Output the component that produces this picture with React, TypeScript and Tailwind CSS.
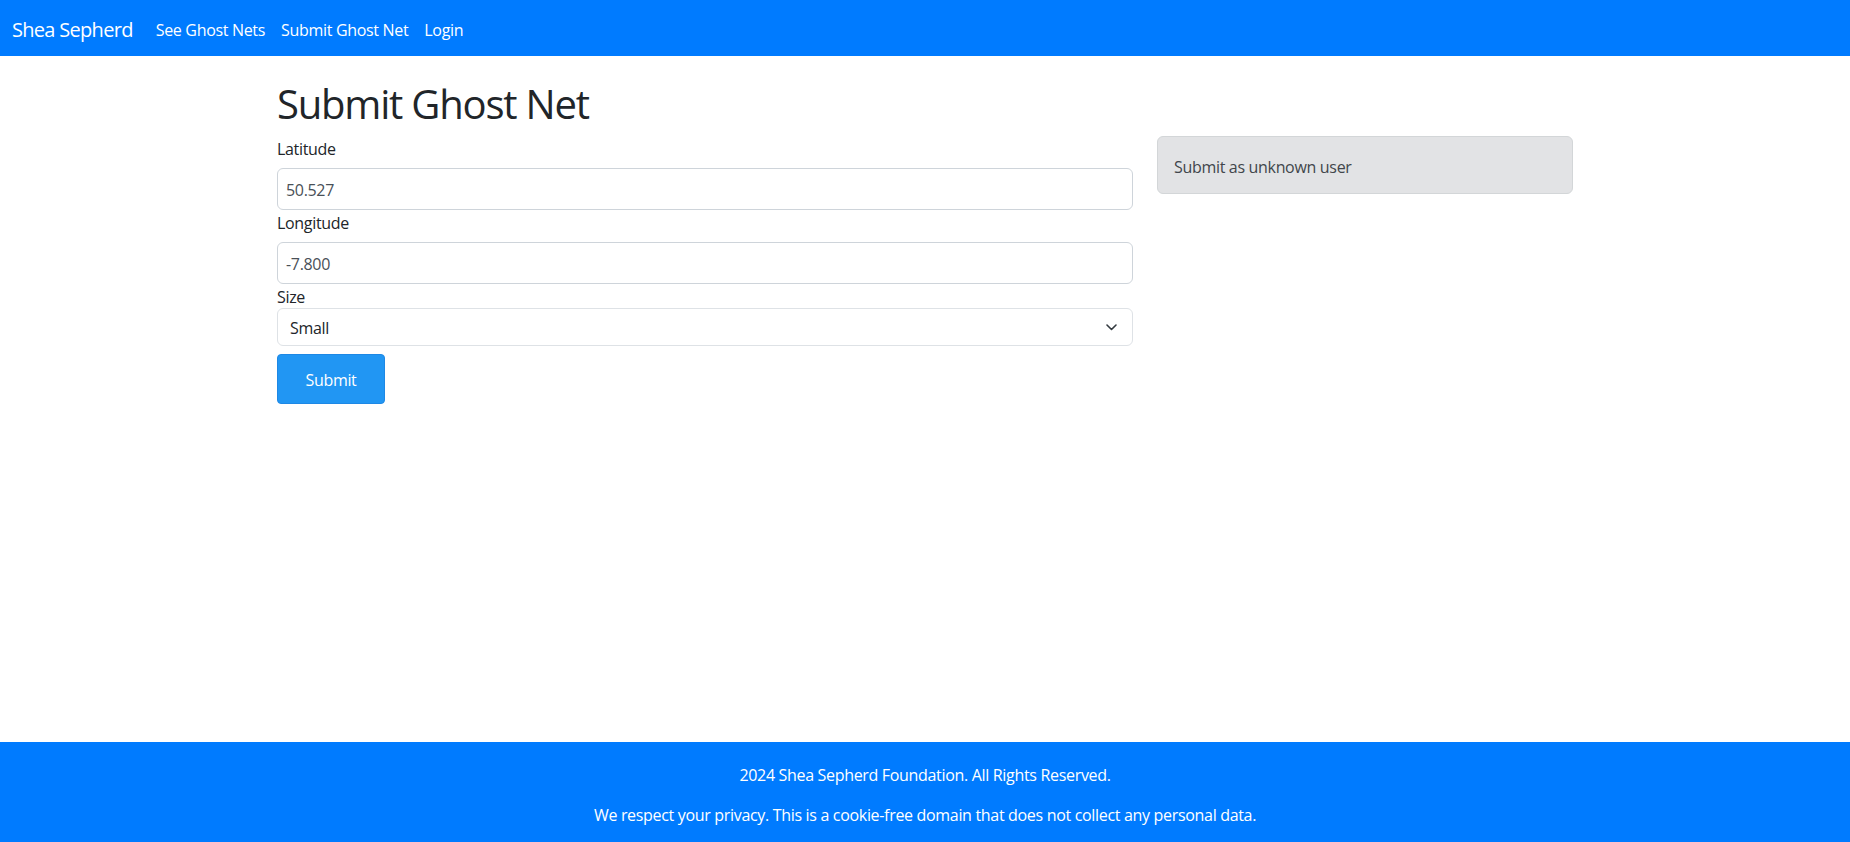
import { useState } from 'react'

const navLinks = ['See Ghost Nets', 'Submit Ghost Net', 'Login']

function Field({ label, value }: { label: string; value: string }) {
  const [val, setVal] = useState(value)
  return (
    <>
      <label className="block leading-[22px] pt-[2px] mb-2">{label}</label>
      <input
        className="block w-full h-[42px] border border-[#ced4da] rounded-[6px] px-2 pt-[2px] text-[#495057] tracking-[-0.02em] outline-none"
        value={val}
        onChange={(e) => setVal(e.target.value)}
      />
    </>
  )
}

export default function App() {
  return (
    <div className="min-h-screen flex flex-col bg-white text-[#212529] text-base tracking-[-0.02em] font-['Open_Sans',sans-serif]">
      <nav className="h-[56px] shrink-0 bg-[#007bff] flex items-center px-3 pt-[3px] text-white">
        <span className="text-[20px] leading-[30px] tracking-[-0.035em] mr-[15px]">Shea Sepherd</span>
        <div className="flex">
          {navLinks.map((l) => (
            <a key={l} href="#" className="px-2 leading-6 text-white">
              {l}
            </a>
          ))}
        </div>
      </nav>

      <main className="flex-1">
        <div className="w-[1296px] mx-auto pt-6">
          <h1 className="text-[40px] leading-[48px] tracking-[-0.03em] font-normal mb-2">Submit Ghost Net</h1>
          <div className="flex gap-6">
            <div className="w-[856px]">
              <Field label="Latitude" value="50.527" />
              <Field label="Longitude" value="-7.800" />
              <label className="block leading-[22px] pt-[2px]">Size</label>
              <div className="relative">
                <select className="block w-full h-[38px] appearance-none border border-[#dee2e6] rounded-[6px] pl-3 pr-10 pt-[2px] bg-white text-[#212529] tracking-[-0.02em] outline-none">
                  <option>Small</option>
                  <option>Medium</option>
                  <option>Large</option>
                </select>
                <svg className="absolute right-[16px] top-[16px] pointer-events-none" width="11" height="7" viewBox="0 0 11 7" fill="none">
                  <path d="M1 1l4.5 4.5L10 1" stroke="#343a40" strokeWidth="1.6" strokeLinecap="round" strokeLinejoin="round" />
                </svg>
              </div>
              <button className="mt-2 w-[108px] h-[50px] pt-[2px] rounded-[4px] bg-[#2196f3] border border-[#1e88e5] text-white tracking-[-0.02em]">
                Submit
              </button>
            </div>
            <div className="w-[416px]">
              <div className="border border-[#d3d6d8] bg-[#e2e3e5] rounded-[6px] px-4 pt-[18px] pb-[14px] leading-6 text-[#41464b]">
                Submit as unknown user
              </div>
            </div>
          </div>
        </div>
      </main>

      <footer className="h-[100px] shrink-0 bg-[#007bff] text-white text-center pt-[21px]">
        <p className="leading-6 mb-4">2024 Shea Sepherd Foundation. All Rights Reserved.</p>
        <p className="leading-6">We respect your privacy. This is a cookie-free domain that does not collect any personal data.</p>
      </footer>
    </div>
  )
}
